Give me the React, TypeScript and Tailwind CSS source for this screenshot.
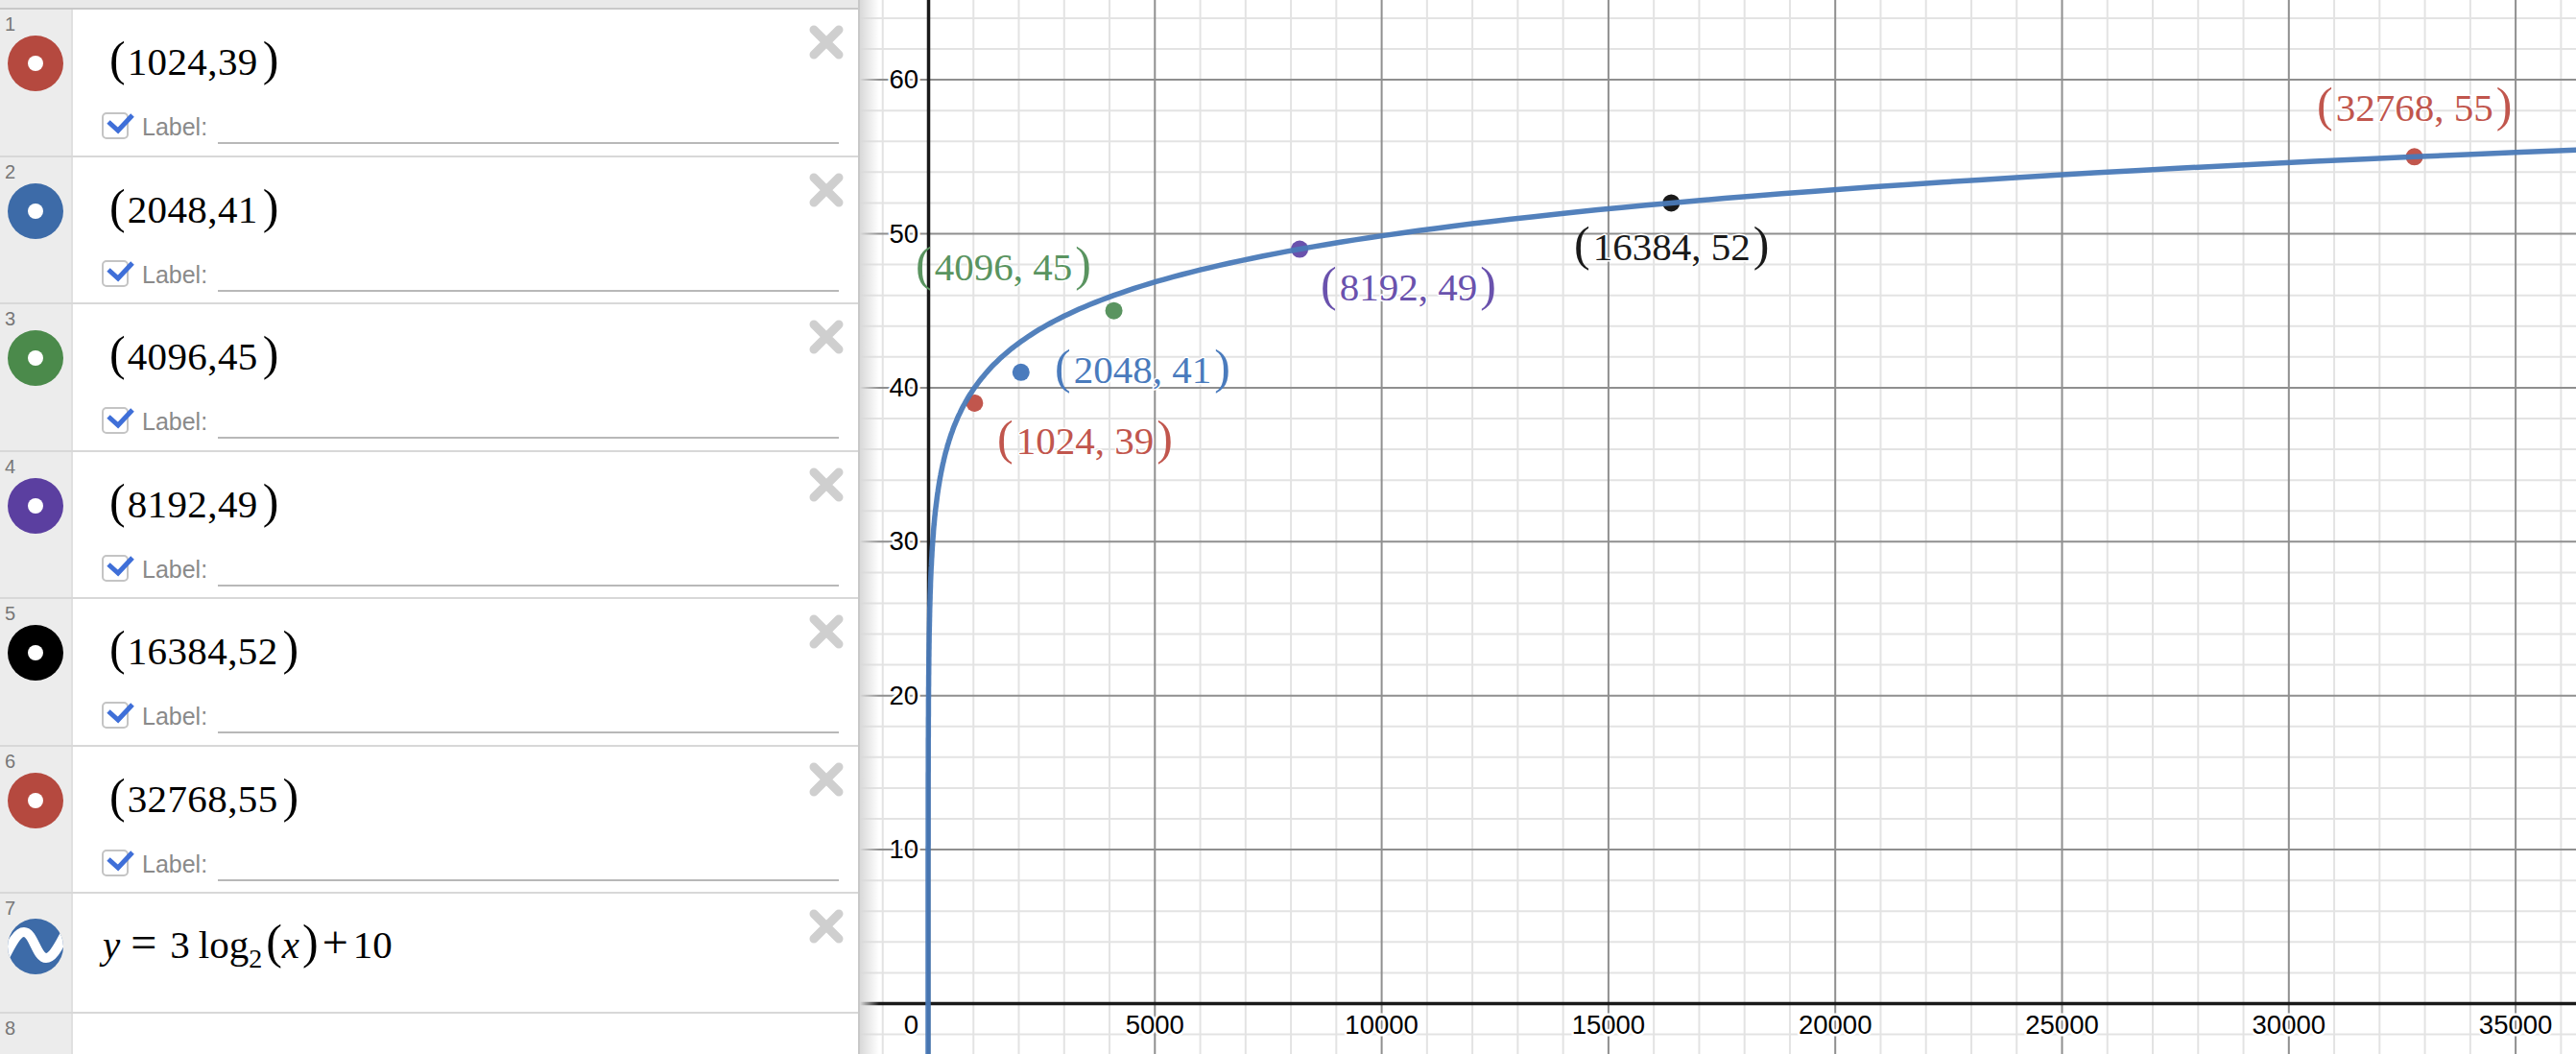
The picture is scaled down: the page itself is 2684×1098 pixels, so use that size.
import React from 'react';

const serif = "font-['Liberation_Serif',serif]";

const X0 = 967;
const Y0 = 1045.5;
const PX_PER_1000 = 47.26;
const PX_PER_UNIT = 16.04;

const toX = (v: number) => X0 + (v / 1000) * PX_PER_1000;
const toY = (v: number) => Y0 - v * PX_PER_UNIT;

const rows = [
  { n: 1, text: '1024,39', color: 'bg-[#b5493f]' },
  { n: 2, text: '2048,41', color: 'bg-[#3d6ba8]' },
  { n: 3, text: '4096,45', color: 'bg-[#4b8a4b]' },
  { n: 4, text: '8192,49', color: 'bg-[#5b3fa0]' },
  { n: 5, text: '16384,52', color: 'bg-black' },
  { n: 6, text: '32768,55', color: 'bg-[#b5493f]' },
];

const points = [
  { x: 1024, y: 39, fill: '#c1564d', text: '1024, 39', lx: 1039, ly: 473 },
  { x: 2048, y: 41, fill: '#4a7bbd', text: '2048, 41', lx: 1099, ly: 399 },
  { x: 4096, y: 45, fill: '#5a9460', text: '4096, 45', lx: 954, ly: 292 },
  { x: 8192, y: 49, fill: '#6a52ad', text: '8192, 49', lx: 1376, ly: 313 },
  { x: 16384, y: 52, fill: '#1a1a1a', text: '16384, 52', lx: 1640, ly: 271 },
  { x: 32768, y: 55, fill: '#c1564d', text: '32768, 55', lx: 2414, ly: 126 },
];

const xTicks = [5000, 10000, 15000, 20000, 25000, 30000, 35000];
const yTicks = [10, 20, 30, 40, 50, 60];

function curvePath() {
  const out: string[] = [];
  for (let e = -8; e <= 15.3; e += 0.05) {
    const v = Math.pow(2, e);
    out.push(`${toX(v).toFixed(1)},${toY(3 * e + 10).toFixed(1)}`);
  }
  return out.join(' ');
}

function DeleteIcon() {
  return (
    <svg width="38" height="38" viewBox="0 0 38 38" className="absolute right-[14px] top-[15px]">
      <path d="M6 6 L32 32 M32 6 L6 32" stroke="#cfcfcf" strokeWidth="9" strokeLinecap="round" />
    </svg>
  );
}

function Gutter({ n, children }: { n: number; children?: React.ReactNode }) {
  return (
    <div className="relative w-[76px] shrink-0 self-stretch border-r-2 border-[#e0e0e0] bg-[#ececec]">
      <span className="absolute left-[5px] top-[3px] font-['Liberation_Sans',sans-serif] text-[20px] leading-[24px] text-[#777777]">
        {n}
      </span>
      {children}
    </div>
  );
}

function PointRow({ n, text, color }: { n: number; text: string; color: string }) {
  return (
    <div className="relative flex h-[153.5px] border-b-2 border-[#d8d8d8]">
      <Gutter n={n}>
        <div className={`absolute left-[8px] top-[27px] flex h-[58px] w-[58px] items-center justify-center rounded-full ${color}`}>
          <div className="h-[16px] w-[16px] rounded-full bg-white" />
        </div>
      </Gutter>
      <div className="flex flex-1 flex-col">
        <div className={`mt-[21px] flex h-[60px] items-baseline pl-[38px] ${serif} text-[41px] leading-[60px] text-black`}>
          <span className="text-[50px]">(</span>
          <span className="ml-[2px] tracking-[0.4px]">{text}</span>
          <span className="ml-[5px] text-[50px]">)</span>
        </div>
        <div className="mt-[26px] flex h-[34px] items-start pl-[30px]">
          <div className="relative h-[28px] w-[28px] rounded-[5px] border-2 border-[#c4c4c4] bg-white">
            <svg width="36" height="28" viewBox="0 0 36 28" className="absolute left-[-2px] top-[-2px] overflow-visible">
              <path d="M7 10 L17 19 L32 3" fill="none" stroke="#3f6fd8" strokeWidth="5" />
            </svg>
          </div>
          <span className="ml-[14px] font-['Liberation_Sans',sans-serif] text-[25px] leading-[30px] text-[#8a8a8a]">Label:</span>
          <div className="ml-[11px] mt-[31px] h-[2px] w-[647px] bg-[#b8b8b8]" />
        </div>
      </div>
      <DeleteIcon />
    </div>
  );
}

function FormulaRow() {
  return (
    <div className="relative flex h-[125px] border-b-2 border-[#d8d8d8]">
      <Gutter n={7}>
        <svg width="58" height="58" viewBox="0 0 58 58" className="absolute left-[8px] top-[26px]">
          <defs>
            <clipPath id="wave-clip">
              <circle cx="29" cy="29" r="29" />
            </clipPath>
          </defs>
          <circle cx="29" cy="29" r="29" fill="#3d6ba8" />
          <g clipPath="url(#wave-clip)">
            <path
              d="M-6 46 C3 28 9 14 17 14 C27 14 30 41 40 41 C48 41 53 28 62 12"
              fill="none"
              stroke="white"
              strokeWidth="10"
            />
          </g>
        </svg>
      </Gutter>
      <div className={`mt-[20px] flex h-[60px] items-baseline pl-[31px] ${serif} text-[41px] leading-[60px] text-black`}>
        <span className="italic">y</span>
        <span className="ml-[11px] text-[48px]">=</span>
        <span className="ml-[14px]">3</span>
        <span className="ml-[9px]">log</span>
        <span className="translate-y-[10px] text-[28px]">2</span>
        <span className="ml-[4px] text-[50px]">(</span>
        <span className="italic">x</span>
        <span className="ml-[3px] text-[50px]">)</span>
        <span className="ml-[4px] text-[48px]">+</span>
        <span className="ml-[5px]">10</span>
      </div>
      <DeleteIcon />
    </div>
  );
}

function Graph() {
  const minorX: number[] = [];
  for (let v = -1000; v <= 37000; v += 1000) if (v % 5000 !== 0) minorX.push(v);
  const minorY: number[] = [];
  for (let v = -2; v <= 68; v += 2) if (v % 10 !== 0) minorY.push(v);

  return (
    <div className="relative flex-1 overflow-hidden bg-white">
      <svg width="1788" height="1098" viewBox="896 0 1788 1098" className="block">
        <g stroke="#e3e3e3" strokeWidth="2">
          {minorX.map((v) => (
            <line key={v} x1={toX(v)} x2={toX(v)} y1="0" y2="1098" />
          ))}
          {minorY.map((v) => (
            <line key={v} x1="896" x2="2684" y1={toY(v)} y2={toY(v)} />
          ))}
        </g>
        <g stroke="#8f8f8f" strokeWidth="2">
          {xTicks.map((v) => (
            <line key={v} x1={toX(v)} x2={toX(v)} y1="0" y2="1098" />
          ))}
          {yTicks.map((v) => (
            <line key={v} x1="896" x2="2684" y1={toY(v)} y2={toY(v)} />
          ))}
        </g>
        <line x1={X0 + 0.5} x2={X0 + 0.5} y1="0" y2="1098" stroke="#1a1a1a" strokeWidth="3.5" />
        <line x1="896" x2="2684" y1={Y0} y2={Y0} stroke="#1a1a1a" strokeWidth="3.5" />

        <g className="font-['Liberation_Sans',sans-serif] text-[27.5px] [paint-order:stroke]" fill="black" stroke="white" strokeWidth="5" strokeLinejoin="round">
          {yTicks.map((v) => (
            <text key={v} x="957" y={toY(v) + 9} textAnchor="end">
              {v}
            </text>
          ))}
          <text x="957" y="1077" textAnchor="end">0</text>
          {xTicks.map((v) => (
            <text key={v} x={toX(v)} y="1077" textAnchor="middle">
              {v}
            </text>
          ))}
        </g>

        {points.map((p) => (
          <text key={p.text} x={p.lx} y={p.ly} fill={p.fill} className={`${serif} text-[41px] [paint-order:stroke]`}>
            <tspan className="text-[50px]">(</tspan>
            <tspan dx="3" stroke="white" strokeWidth="3" strokeLinejoin="round">{p.text}</tspan>
            <tspan dx="3" className="text-[50px]">)</tspan>
          </text>
        ))}

        {points.map((p) => (
          <circle key={p.x} cx={toX(p.x)} cy={toY(p.y)} r="9" fill={p.fill} />
        ))}

        <polyline points={curvePath()} fill="none" stroke="#4a7ab8" strokeWidth="5.5" strokeOpacity="0.95" />
      </svg>
      {/* shadow cast by the expression list */}
      <div className="absolute inset-y-0 left-0 w-[20px] bg-gradient-to-r from-[#d9d9d9] to-white/0" />
    </div>
  );
}

export default function App() {
  return (
    <div className="flex h-[1098px] w-[2684px] overflow-hidden bg-white">
      <aside className="flex w-[896px] shrink-0 flex-col border-r-2 border-[#c8c8c8] bg-white">
        <div className="h-[10px] shrink-0 border-b-2 border-[#c8c8c8] bg-[#e9e9e9]" />
        {rows.map((r) => (
          <PointRow key={r.n} n={r.n} text={r.text} color={r.color} />
        ))}
        <FormulaRow />
        <div className="flex flex-1">
          <Gutter n={8} />
        </div>
      </aside>
      <Graph />
    </div>
  );
}
